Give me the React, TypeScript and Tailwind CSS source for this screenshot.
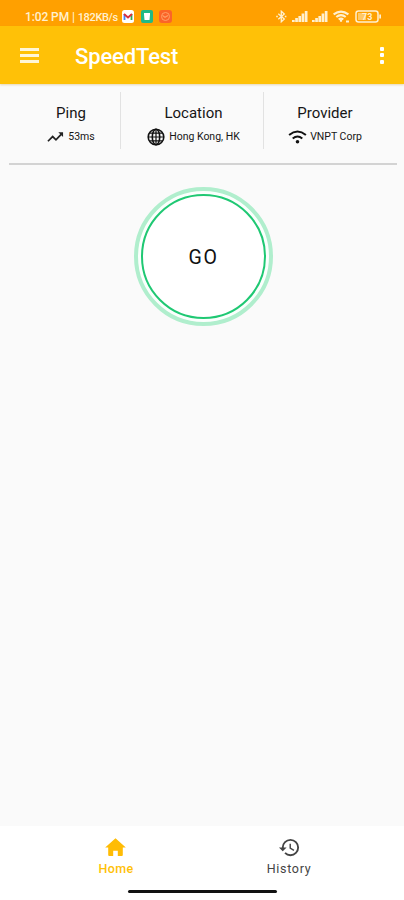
import React from 'react';
import { MdHistory } from 'react-icons/md';

const Signal = () => (
  <svg width="16" height="11" viewBox="0 0 16 11" fill="#fff0cf">
    <rect x="0" y="9" width="2.7" height="2" />
    <rect x="3.2" y="7" width="2.7" height="4" />
    <rect x="6.4" y="5" width="2.7" height="6" />
    <rect x="9.6" y="2.5" width="2.7" height="8.5" />
    <rect x="12.8" y="0" width="2.7" height="11" />
  </svg>
);

const StatusBar = () => (
  <div className="flex h-[26px] items-center bg-[#ffa000] pl-[25px] pt-[7px] text-[#fff0d0]">
    <span className="w-[94px] whitespace-nowrap pt-px text-[12px] font-medium leading-[18px] tracking-[-0.1px]">
      1:02 PM | <span className="text-[11px] tracking-[-0.35px]">182KB/s</span>
    </span>
    <svg className="ml-[3px]" width="12" height="13" viewBox="0 0 12 13">
      <rect width="12" height="13" rx="2.5" fill="#fff" />
      <path d="M2.5 10V4" stroke="#4285f4" strokeWidth="1.8" />
      <path d="M9.5 10V4" stroke="#34a853" strokeWidth="1.8" />
      <path d="M2 4l4 3.5L10 4" fill="none" stroke="#d93040" strokeWidth="1.9" />
    </svg>
    <svg className="ml-[7px]" width="12" height="13" viewBox="0 0 12 13">
      <rect width="12" height="13" rx="2" fill="#20b985" />
      <path d="M3 3h6v1.5L8.5 10h-5L3 4.5z" fill="#fff" />
    </svg>
    <svg className="ml-[6px]" width="13" height="13" viewBox="0 0 13 13">
      <rect width="13" height="13" rx="3" fill="#fb6428" />
      <circle cx="6.5" cy="6.5" r="4" fill="none" stroke="#ffa066" strokeWidth="1" />
      <path d="M3.5 5.5L6 7.2 9 5.5" fill="none" stroke="#ffa066" strokeWidth="1.2" />
    </svg>
    <svg className="ml-[103px]" width="13" height="13" viewBox="0 0 13 13" fill="none" stroke="#fff0cf" strokeWidth="1.3">
      <path d="M3.3 3.7l6 5.4-3 2.7V1.2l3 2.7-6 5.4" />
      <path d="M1.2 6.5h1.6M9.8 6.5h1.6" />
    </svg>
    <div className="ml-[4px] flex items-center gap-[4px]">
      <Signal />
      <Signal />
    </div>
    <svg className="ml-[5px]" width="17" height="13" viewBox="0 0 17 13" fill="none" stroke="#fff0cf" strokeWidth="2.1">
      <path d="M0.6 4.4Q8 -1.2 15.4 4.4" />
      <path d="M3.3 7Q8 3.2 12.7 7" />
      <path d="M5.7 9.5Q8 7.6 10.3 9.5" />
      <path d="M8 9.5v2.3M13 11.5h3" />
    </svg>
    <svg className="ml-[5px]" width="27" height="13" viewBox="0 0 27 13">
      <rect x="1" y="1" width="22" height="11" rx="2.5" fill="none" stroke="#fff0cf" strokeWidth="1.5" />
      <rect x="3" y="3" width="8" height="7" fill="#ffc966" />
      <rect x="24.3" y="4.5" width="1.7" height="4" fill="#fff0cf" />
      <text x="7" y="10" fontSize="9" fontWeight="700" fill="#fff0cf">73</text>
    </svg>
  </div>
);

const Header = () => (
  <header className="flex h-[58px] items-center bg-[#ffc107] pl-5 pr-[20px] text-white shadow-[0_1px_2px_rgba(190,150,50,0.35)]">
    <div className="flex w-[19px] flex-col gap-[3px]">
      <span className="h-[3px] bg-[#fff6d6]" />
      <span className="h-[3px] bg-[#fff6d6]" />
      <span className="h-[3px] bg-[#fff6d6]" />
    </div>
    <h1 className="ml-9 pt-[4px] text-[22px] font-medium leading-7 tracking-[-0.15px]">SpeedTest</h1>
    <div className="ml-auto flex w-1 flex-col gap-[2.5px]">
      <span className="size-1 rounded-[1px] bg-white" />
      <span className="size-1 rounded-[1px] bg-white" />
      <span className="size-1 rounded-[1px] bg-white" />
    </div>
  </header>
);

const Info = () => (
  <section className="ml-[9px] mr-[7px] grid h-[81px] grid-cols-[112px_143px_133px] border-b-2 border-[#d3d3d3] pt-2 text-[#161616]">
    <div className="flex h-[57px] flex-col items-center border-r border-[#e2e2e2] pl-[13px] pt-[11px]">
      <h2 className="text-[15px] leading-[21px]">Ping</h2>
      <p className="mt-[3px] flex items-center gap-[4px] text-[10.5px] leading-[18px]">
        <svg width="17" height="12" viewBox="0 0 18 12" fill="none" stroke="#222" strokeWidth="1.8">
          <path d="M1 10.5l5-5 3.5 3.5 6-6.3" />
          <path d="M12 1h5v5z" fill="#222" stroke="none" />
        </svg>
        <span className="pt-px">53ms</span>
      </p>
    </div>
    <div className="flex h-[57px] flex-col items-center border-r border-[#e2e2e2] pl-[3px] pt-[11px]">
      <h2 className="text-[15px] leading-[21px]">Location</h2>
      <p className="mt-[3px] flex items-center gap-[4px] whitespace-nowrap text-[10.5px] leading-[18px]">
        <svg width="18" height="18" viewBox="0 0 18 18" fill="none" stroke="#111" strokeWidth="1.6">
          <circle cx="9" cy="9" r="7.8" />
          <ellipse cx="9" cy="9" rx="3.7" ry="7.8" />
          <path d="M9 1v16M1 9h16M2.2 5.2h13.6M2.2 12.8h13.6" strokeWidth="1.2" />
        </svg>
        <span className="pt-px">Hong Kong, HK</span>
      </p>
    </div>
    <div className="flex h-[57px] flex-col items-center pt-[11px] pr-[11px]">
      <h2 className="text-[15px] leading-[21px]">Provider</h2>
      <p className="mt-[3px] flex items-center gap-[3px] whitespace-nowrap text-[10.5px] leading-[18px]">
        <svg width="19" height="14" viewBox="0 0 18 14" fill="none" stroke="#111" strokeWidth="2">
          <path d="M0.6 5Q9 -1.9 17.4 5" />
          <path d="M4.2 8.5Q9 4.6 13.8 8.5" />
          <circle cx="9" cy="11.7" r="1.8" fill="#111" stroke="none" />
        </svg>
        <span className="pt-px">VNPT Corp</span>
      </p>
    </div>
  </section>
);

export default function App() {
  return (
    <div className="flex h-[900px] w-[404px] flex-col overflow-hidden bg-[#fafafa] font-['Roboto','Liberation_Sans',sans-serif]">
      <StatusBar />
      <Header />
      <Info />
      <main className="flex flex-1 flex-col items-center pl-[2px] pt-[22px]">
        <button className="flex size-[139px] items-center justify-center rounded-full border-4 border-[#b0eecd] bg-[#fbfffd] p-[3px]">
          <span className="flex size-full items-center justify-center rounded-full border-2 border-[#1fc873] bg-white pl-px pt-[3px] text-[19.5px] tracking-[1.6px] text-[#111]">
            GO
          </span>
        </button>
      </main>
      <nav className="flex h-[74px] flex-col bg-white">
        <div className="flex h-[64px] justify-between pl-[90px] pr-[84px] pt-[10px]">
          <div className="flex w-[52px] flex-col items-center text-[#ffc107]">
            <svg className="mr-px" width="23" height="23" viewBox="0 0 23 23" fill="#ffbc05">
              <path d="M11.5 2.2L1.2 11.5h3V19q0 1 1 1h4v-5.2h4.6V20h4q1 0 1-1v-7.5h3z" />
            </svg>
            <span className="mt-px text-[12.5px] font-medium leading-[18px] tracking-[0.4px]">Home</span>
          </div>
          <div className="flex w-[62px] flex-col items-center text-[#444]">
            <MdHistory size={23} />
            <span className="mt-px text-[12.5px] leading-[18px] tracking-[0.7px]">History</span>
          </div>
        </div>
        <div className="mx-auto h-[3px] w-[149px] rounded-full bg-[#111]" />
      </nav>
    </div>
  );
}
